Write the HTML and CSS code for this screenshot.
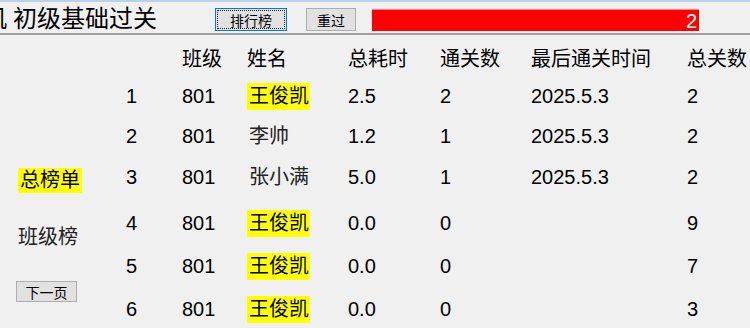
FILE: index.html
```html
<!DOCTYPE html>
<html lang="zh-CN">
<head>
<meta charset="utf-8">
<title>排行榜</title>
<link rel="stylesheet" href="styles.css">
</head>
<body>
<div class="topbar">
  <div class="title"><span class="cut"><span>机</span></span>初级基础过关</div>
  <button class="btn rank-btn"><span class="focus-ring">排行榜</span></button>
  <button class="btn reset-btn">重过</button>
  <div class="bar">2</div>
</div>
<div class="main">
  <div class="side">
    <span class="side-total">总榜单</span>
    <span class="side-class">班级榜</span>
    <button class="btn next-btn">下一页</button>
  </div>
  <div class="board">
    <div></div><div>班级</div><div>姓名</div><div>总耗时</div><div>通关数</div><div>最后通关时间</div><div>总关数</div>

    <div>1</div><div>801</div><div><span class="hl">王俊凯</span></div><div>2.5</div><div>2</div><div>2025.5.3</div><div>2</div>
    <div>2</div><div>801</div><div class="plain">李帅</div><div>1.2</div><div>1</div><div>2025.5.3</div><div>2</div>
    <div>3</div><div>801</div><div class="plain">张小满</div><div>5.0</div><div>1</div><div>2025.5.3</div><div>2</div>
    <div>4</div><div>801</div><div><span class="hl">王俊凯</span></div><div>0.0</div><div>0</div><div></div><div>9</div>
    <div>5</div><div>801</div><div><span class="hl">王俊凯</span></div><div>0.0</div><div>0</div><div></div><div>7</div>
    <div>6</div><div>801</div><div><span class="hl">王俊凯</span></div><div>0.0</div><div>0</div><div></div><div>3</div>
  </div>
</div>
</body>
</html>
```
FILE: styles.css
```css
html, body {
  margin: 0;
  padding: 0;
}
body {
  width: 750px;
  height: 328px;
  overflow: hidden;
  background: #f0f0f0;
  color: #000;
  font-family: "Liberation Sans", "Noto Sans CJK SC", sans-serif;
}

.topbar {
  display: flex;
  align-items: flex-start;
  height: 31px;
  border-top: 2px solid #b9d1ea;
  border-bottom: 2px solid #a0a0a0;
}

.title {
  display: flex;
  width: 215px;
  flex: none;
  margin-top: 2px;
  font-size: 24px;
  line-height: 29px;
  white-space: nowrap;
  overflow: hidden;
}
.cut {
  display: block;
  width: 8px;
  overflow: hidden;
  margin-right: 5px;
  flex: none;
}
.cut span {
  display: inline-block;
  margin-left: -17px;
}

.btn {
  font-family: "Liberation Sans", "Noto Sans CJK SC", sans-serif;
  font-size: 14px;
  color: #000;
  background: #e1e1e1;
  border: 1px solid #adadad;
  border-radius: 0;
  padding: 0;
  margin: 0;
  box-sizing: border-box;
  height: 23px;
  display: flex;
  align-items: center;
  justify-content: center;
  flex: none;
}
.rank-btn {
  width: 72px;
  margin-top: 6px;
  margin-right: 19px;
  border-color: #0078d7;
  align-items: stretch;
}
.focus-ring {
  flex: 1;
  margin: 1px;
  border: 1px dotted #222;
  display: flex;
  align-items: center;
  justify-content: center;
}
.reset-btn {
  width: 50px;
  margin-top: 6px;
  margin-right: 16px;
}

.bar {
  width: 327px;
  height: 22px;
  box-sizing: border-box;
  margin-top: 7px;
  background: #ff0000;
  border-top: 1px solid #ff8080;
  padding: 2px 2px 0 0;
  color: #fff;
  font-size: 20px;
  line-height: 19px;
  text-align: right;
  flex: none;
}

.main {
  display: flex;
}

.side {
  width: 126px;
  flex: none;
  box-sizing: border-box;
  padding: 133px 0 0 16px;
  display: flex;
  flex-direction: column;
  align-items: flex-start;
  font-size: 20px;
  line-height: 25px;
}
.side-total {
  margin-left: 2px;
  padding: 0 2px;
  background: #ffff00;
}
.side-class {
  margin: 32px 0 0 2px;
  color: #222;
}
.next-btn {
  width: 61px;
  height: 21px;
  margin-top: 31px;
}

.board {
  flex: 1;
  display: grid;
  grid-template-columns: 56px 65px 101px 92px 91px 156px 1fr;
  grid-template-rows: 37px 40px 41px 46px 43px 43px 27px;
  padding-top: 11px;
  font-size: 20px;
  line-height: 27px;
  white-space: nowrap;
}
.plain {
  padding-left: 2px;
  color: #222;
}
.hl {
  display: inline-block;
  padding: 0 1px 0 2px;
  background: #ffff00;
}
```
